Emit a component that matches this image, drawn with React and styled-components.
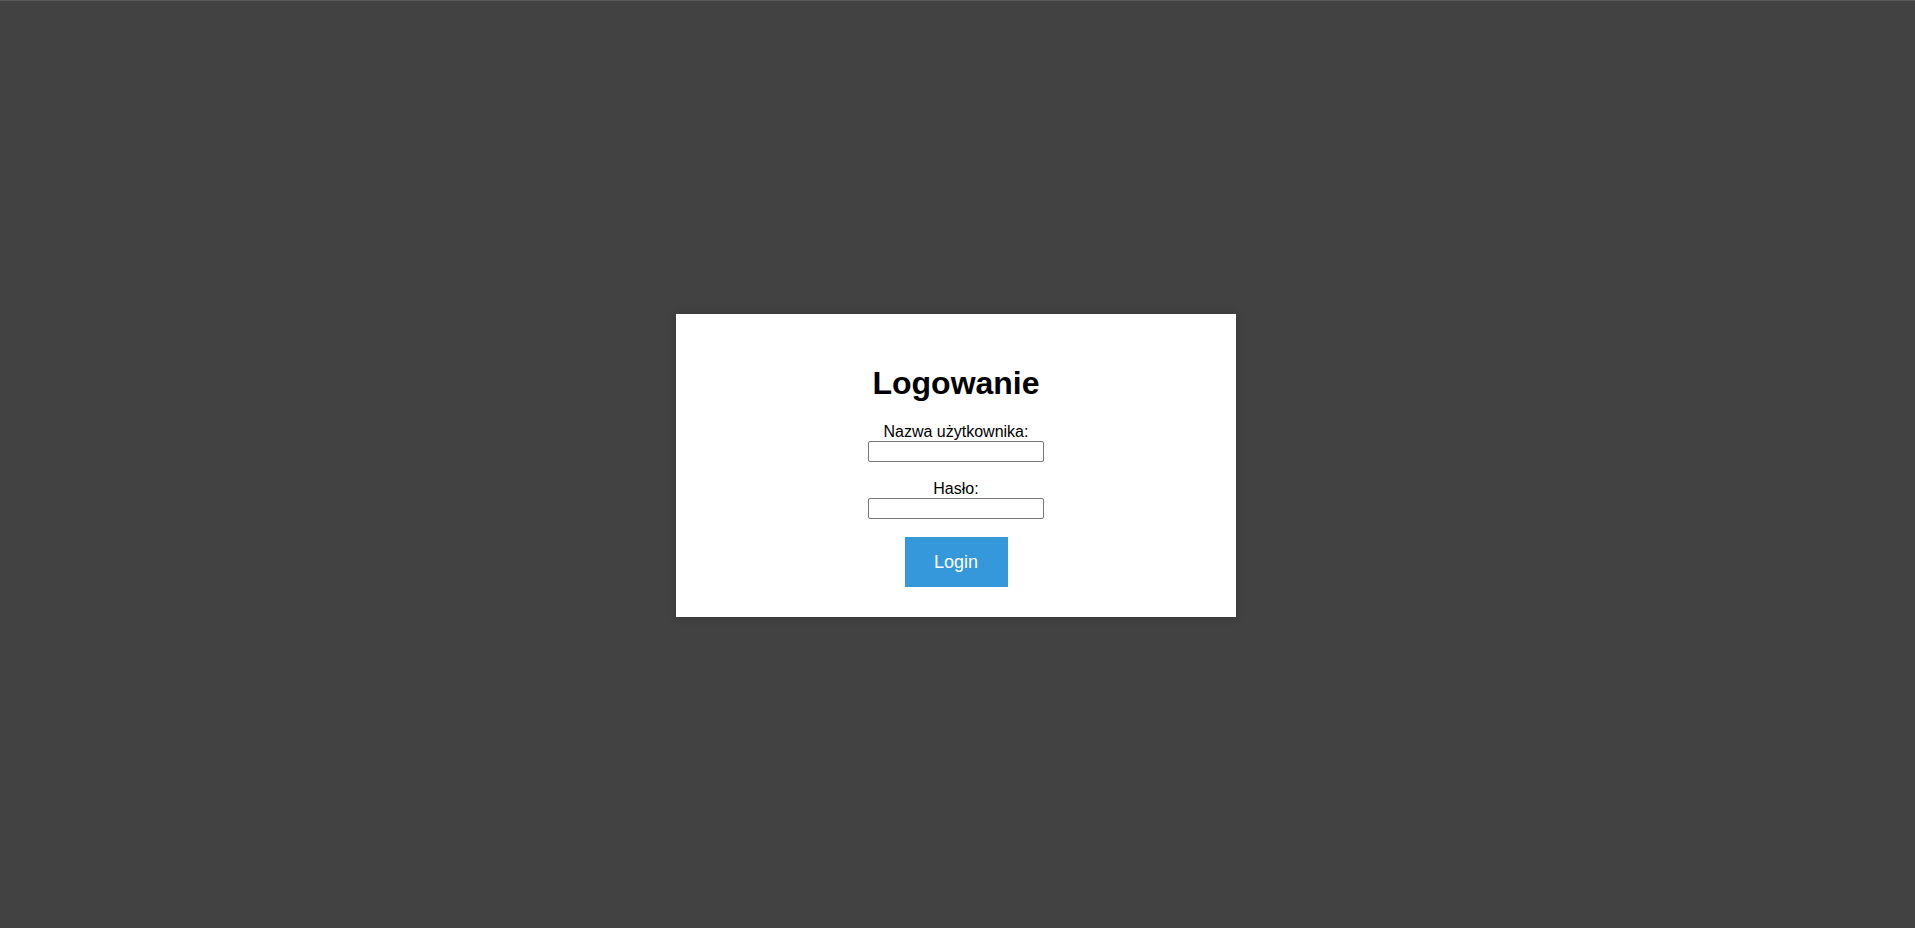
import React from 'react';
import styled, { createGlobalStyle } from 'styled-components';

const GlobalStyle = createGlobalStyle`
    html, body {
        margin: 0;
        padding: 0;
        height: 100%;
    }
    body {
        background: #424242;
        font-family: "Liberation Sans", Arial, sans-serif;
    }
    #root {
        height: 100%;
    }
`

const App = () => {
    return (
        <>
            <GlobalStyle />
            <Page>
                <Card>
                    <Title>Logowanie</Title>
                    <Form onSubmit={(e) => e.preventDefault()}>
                        <Field>
                            <Label htmlFor="username">Nazwa użytkownika:</Label>
                            <Input id="username" type="text" />
                        </Field>
                        <Field>
                            <Label htmlFor="password">Hasło:</Label>
                            <Input id="password" type="password" />
                        </Field>
                        <Button type="submit">Login</Button>
                    </Form>
                </Card>
            </Page>
        </>
    );
}

export default App;

const Page = styled.div`
    height: 100vh;
    box-sizing: border-box;
    border-top: 1px solid #5a5a5a;
    padding-top: 2px;
    display: flex;
    align-items: center;
    justify-content: center;
`

const Card = styled.div`
    width: 560px;
    box-sizing: border-box;
    padding: 30px 20px 30px;
    background: #ffffff;
    box-shadow: 0 0 10px rgba(0, 0, 0, 0.15);
    display: flex;
    flex-direction: column;
    align-items: center;
    margin-left: -3px;
`

const Title = styled.h1`
    margin: 21px 0;
    font-size: 32px;
    font-weight: 700;
    color: #000;
    line-height: normal;
`

const Form = styled.form`
    display: flex;
    flex-direction: column;
    align-items: center;
    gap: 18px;
`

const Field = styled.div`
    display: flex;
    flex-direction: column;
    align-items: center;
`

const Label = styled.label`
    font-size: 16px;
    line-height: normal;
    color: #000;
`

const Input = styled.input`
    width: 176px;
    height: 21px;
    box-sizing: border-box;
    margin: 0;
    padding: 1px 2px;
    border: 1px solid #767676;
    border-radius: 2px;
    background: #fff;
    font-size: 13px;
    font-family: "Liberation Sans", Arial, sans-serif;
`

const Button = styled.button`
    width: 103px;
    height: 50px;
    border: none;
    margin: 0;
    padding: 0;
    background: #3498db;
    color: #fff;
    font-size: 18px;
    font-family: "Liberation Sans", Arial, sans-serif;
    cursor: pointer;
`
